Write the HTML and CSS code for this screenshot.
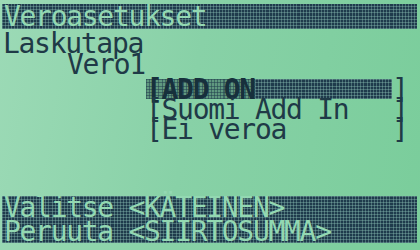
FILE: index.html
```html
<!DOCTYPE html>
<html lang="fi">
<head>
<meta charset="UTF-8">
<meta name="viewport" content="width=device-width, initial-scale=1.0">
<title>Veroasetukset</title>
<link rel="stylesheet" href="styles.css">
</head>
<body>
    <div class="screen">
        <div class="bar title">Veroasetukset</div>
        <div class="row first">Laskutapa</div>
        <div class="row indent">Vero1</div>
        <div class="options">
            <div class="option selected">
                <span class="label">[ADD ON</span>
                <span class="fill"></span>
                <span class="end">]</span>
            </div>
            <div class="option">
                <span class="label">[Suomi Add In</span>
                <span class="end">]</span>
            </div>
            <div class="option">
                <span class="label">[Ei veroa</span>
                <span class="end">]</span>
            </div>
        </div>
        <div class="bar footer">
            <div class="foot-row first">Valitse &lt;KÄTEINEN&gt;</div>
            <div class="foot-row">Peruuta &lt;SIIRTOSUMMA&gt;</div>
        </div>
    </div>
</body>
</html>
```
FILE: styles.css
```css
html, body {
    margin: 0;
    padding: 0;
}

body {
    width: 420px;
    height: 250px;
    overflow: hidden;
    background: linear-gradient(100deg, #9cdab6 0%, #88d1a7 45%, #7acd9b 100%);
    font-family: "DejaVu Sans Mono", "Liberation Mono", monospace;
    font-size: 28px;
    letter-spacing: -1.3px;
    color: #1f3a47;
}

.screen {
    height: 250px;
    display: flex;
    flex-direction: column;
    padding: 4px 3px 7px 2px;
    box-sizing: border-box;
}

.bar {
    background-color: #1f3b4c;
    background-image:
        repeating-linear-gradient(90deg, rgba(150, 205, 190, 0.35) 0 1px, transparent 1px 3.1px),
        repeating-linear-gradient(0deg, rgba(150, 205, 190, 0.35) 0 1px, transparent 1px 3.1px);
    color: #93d8b2;
}

.title {
    height: 25px;
    line-height: 25px;
    padding-left: 2px;
    white-space: pre;
}

.row {
    height: 21px;
    line-height: 21px;
    padding-left: 1px;
    white-space: pre;
}

.row.first {
    margin-top: 4px;
}

.indent {
    padding-left: 65px;
}

.options {
    margin: 4px 0 0 144px;
    width: 262px;
}

.option {
    display: flex;
    height: 20px;
    line-height: 22px;
    white-space: pre;
}

.option .label {
    flex: 1;
}

.selected .label {
    flex: none;
    background-color: #5f987f;
    background-image:
        repeating-linear-gradient(90deg, rgba(31, 59, 76, 0.5) 0 1px, transparent 1px 3.1px),
        repeating-linear-gradient(0deg, rgba(31, 59, 76, 0.5) 0 1px, transparent 1px 3.1px);
    color: #17303c;
    font-weight: bold;
}

.selected .fill {
    flex: 1;
    background-color: #1f3b4c;
    background-image:
        repeating-linear-gradient(90deg, rgba(150, 205, 190, 0.35) 0 1px, transparent 1px 3.1px),
        repeating-linear-gradient(0deg, rgba(150, 205, 190, 0.35) 0 1px, transparent 1px 3.1px);
}

.end {
    width: 16px;
}

.footer {
    margin-top: auto;
    padding-left: 2px;
}

.foot-row {
    height: 23px;
    line-height: 23px;
    white-space: pre;
}

.foot-row.first {
    height: 24px;
    line-height: 24px;
}
```
